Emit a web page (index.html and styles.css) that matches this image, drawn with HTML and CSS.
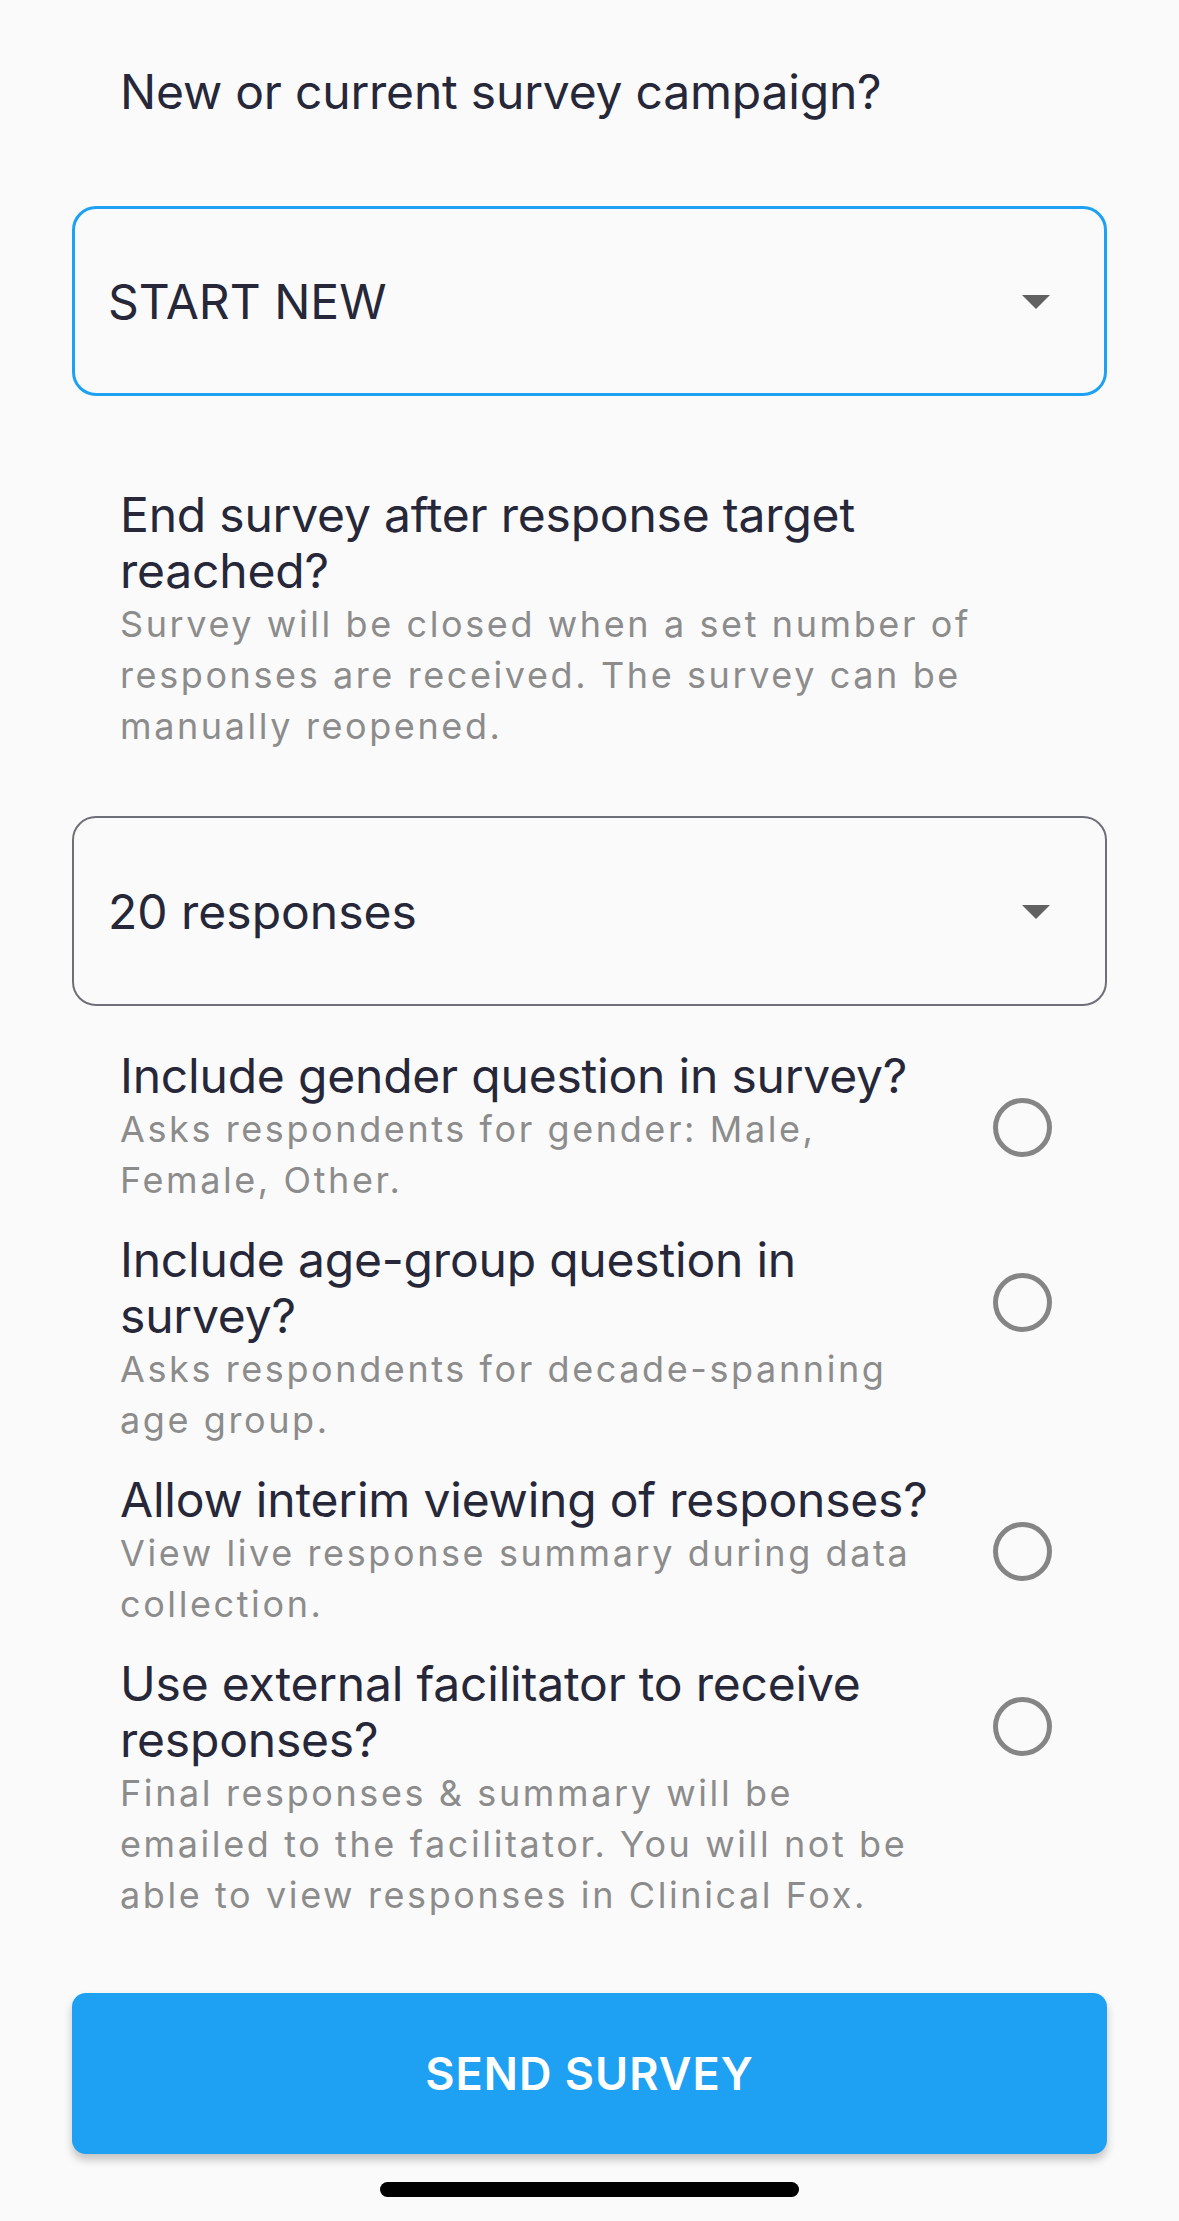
FILE: index.html
```html
<!DOCTYPE html>
<html lang="en">
<head>
  <meta charset="UTF-8">
  <meta name="viewport" content="width=device-width, initial-scale=1.0">
  <title>Send survey</title>
  <link rel="stylesheet" href="styles.css">
</head>
<body>
  <div class="page">
    <p class="question title">New or current survey campaign?</p>

    <div class="dropdown focused">
      <span class="dropdown-value">START NEW</span>
      <span class="caret"></span>
    </div>

    <div class="question block">
      <p class="heading">End survey after response target<br>reached?</p>
      <p class="hint">Survey will be closed when a set number of<br>responses are received. The survey can be<br>manually reopened.</p>
    </div>

    <div class="dropdown">
      <span class="dropdown-value">20 responses</span>
      <span class="caret"></span>
    </div>

    <div class="options">
      <div class="option">
        <div class="option-text">
          <p class="heading">Include gender question in survey?</p>
          <p class="hint">Asks respondents for gender: Male,<br>Female, Other.</p>
        </div>
        <span class="radio"></span>
      </div>

      <div class="option tall">
        <div class="option-text">
          <p class="heading">Include age-group question in<br>survey?</p>
          <p class="hint">Asks respondents for decade-spanning<br>age group.</p>
        </div>
        <span class="radio"></span>
      </div>

      <div class="option">
        <div class="option-text">
          <p class="heading">Allow interim viewing of responses?</p>
          <p class="hint">View live response summary during data<br>collection.</p>
        </div>
        <span class="radio"></span>
      </div>

      <div class="option tall">
        <div class="option-text">
          <p class="heading">Use external facilitator to receive<br>responses?</p>
          <p class="hint">Final responses &amp; summary will be<br>emailed to the facilitator. You will not be<br>able to view responses in Clinical Fox.</p>
        </div>
        <span class="radio"></span>
      </div>
    </div>

    <button class="btn">SEND SURVEY</button>

    <div class="home-bar"></div>
  </div>
</body>
</html>
```

FILE: styles.css
```css
* {
  margin: 0;
  padding: 0;
  box-sizing: border-box;
}

body {
  background-color: #fafafa;
  color: #262738;
  font-family: Inter, "Noto Sans", sans-serif;
}

.page {
  padding: 64px 72px 0;
  min-height: 2221px;
}

.question {
  padding: 0 48px;
}

.title,
.heading {
  font-size: 48px;
  line-height: 56px;
  letter-spacing: -0.2px;
  color: #262738;
}

.hint {
  font-size: 36px;
  line-height: 51px;
  color: #8c8c8c;
  letter-spacing: 2.6px;
  white-space: nowrap;
}

.dropdown {
  height: 190px;
  margin-top: 86px;
  padding: 0 55px 0 34px;
  border: 2px solid #6e6f78;
  border-radius: 24px;
  display: flex;
  align-items: center;
  justify-content: space-between;
}

.dropdown.focused {
  border: 3px solid #1ea1f2;
  padding-left: 33px;
  padding-right: 54px;
}

.dropdown-value {
  font-size: 48px;
  color: #262738;
}

.caret {
  width: 0;
  height: 0;
  border-left: 14px solid transparent;
  border-right: 14px solid transparent;
  border-top: 14px solid #616161;
  margin-top: 2px;
}

.block {
  margin-top: 91px;
}

.block + .dropdown {
  margin-top: 64px;
}

.options {
  margin-top: 42px;
  display: flex;
  flex-direction: column;
  gap: 26px;
}

.option {
  display: flex;
  align-items: center;
  padding-left: 48px;
}

.option-text {
  flex: 1;
}

.radio {
  width: 59px;
  height: 59px;
  margin: 0 55px 0 0;
  border: 5px solid #858585;
  border-radius: 50%;
  flex-shrink: 0;
}

.option.tall {
  align-items: flex-start;
}

.option.tall .radio {
  margin-top: 41px;
}

.btn {
  display: block;
  width: 100%;
  height: 161px;
  margin-top: 72px;
  background-color: #1ea1f2;
  color: #ffffff;
  border: none;
  border-radius: 14px;
  font-family: Inter, "Noto Sans", sans-serif;
  font-size: 45px;
  font-weight: 600;
  letter-spacing: 1px;
  box-shadow: 0 6px 8px rgba(0, 0, 0, 0.22);
  cursor: pointer;
}

.home-bar {
  width: 419px;
  height: 15px;
  margin: 28px auto 0;
  background-color: #000;
  border-radius: 8px;
}
```
